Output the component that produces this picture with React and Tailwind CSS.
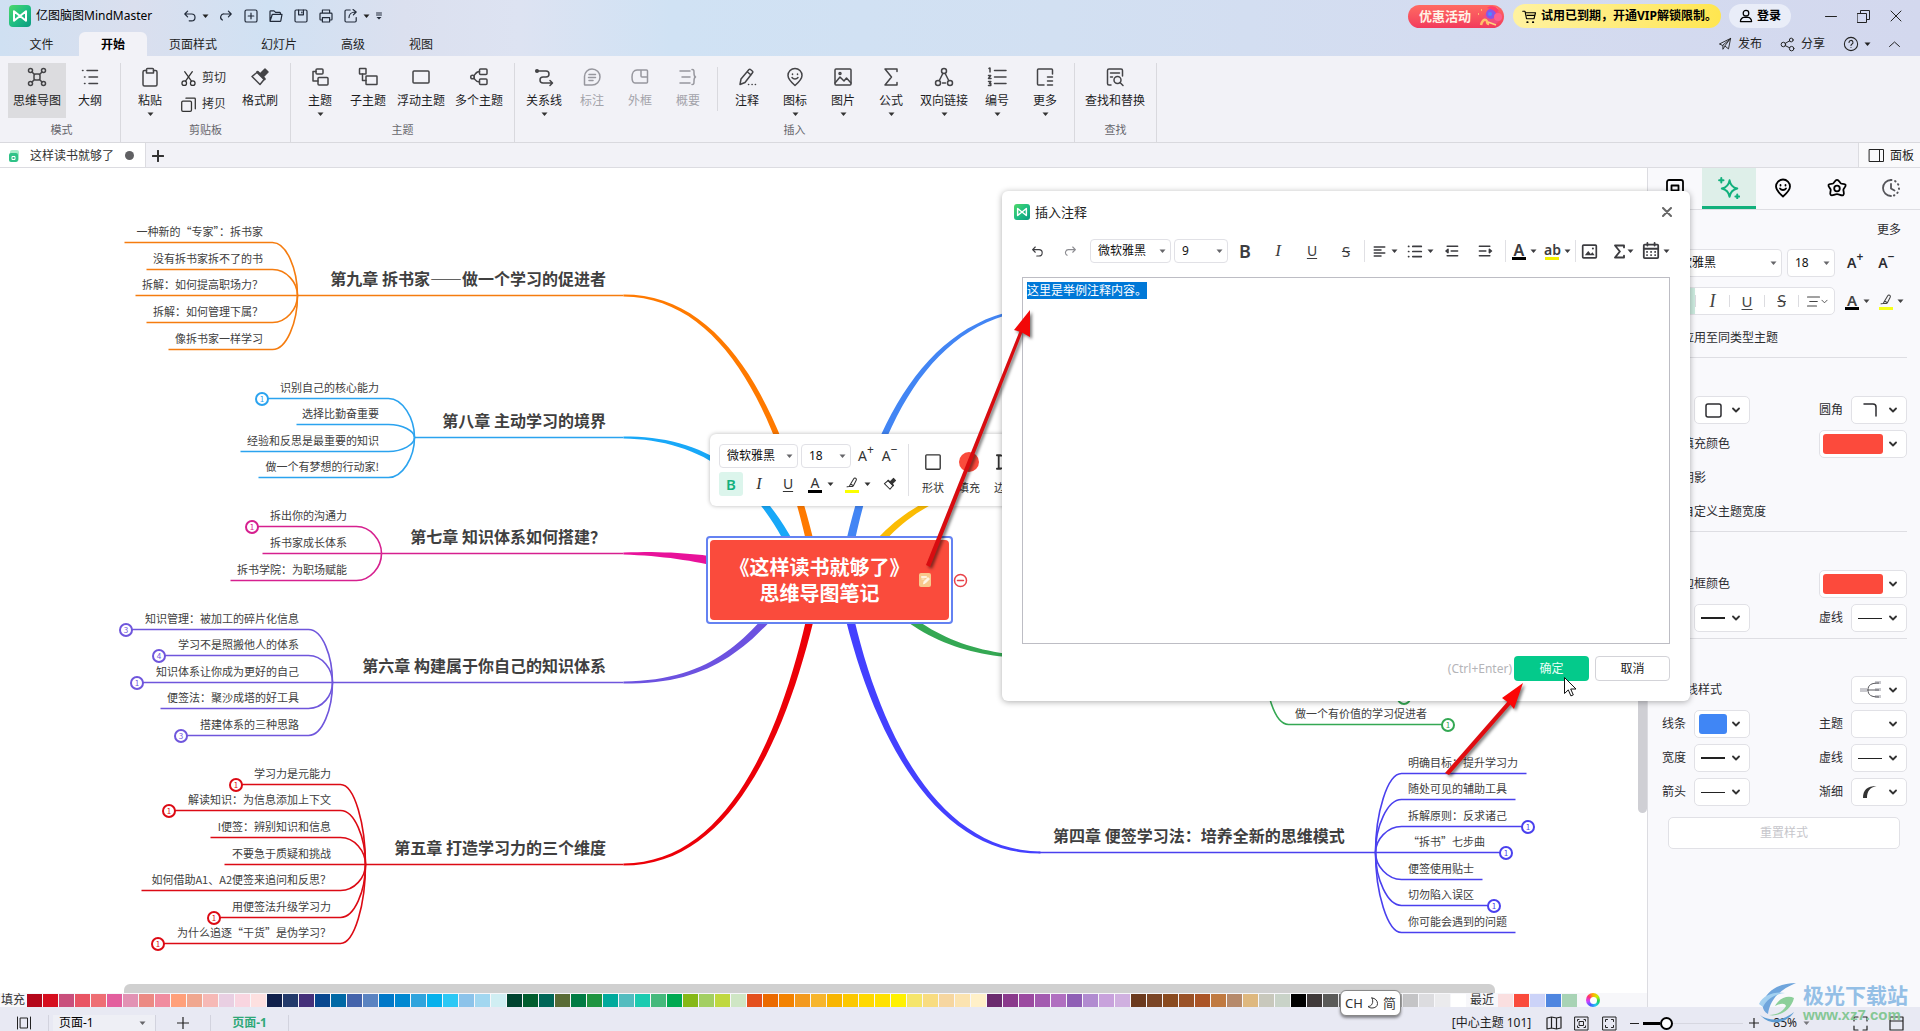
import React, { useEffect, useRef } from "react";

/* ---------- drawing helpers ---------- */

function Svg({ s = 20, w = 1.5, box = 20, className = "", children }) {
  return (
    <svg
      width={s}
      height={s}
      viewBox={`0 0 ${box} ${box}`}
      fill="none"
      stroke="currentColor"
      strokeWidth={w}
      strokeLinecap="round"
      strokeLinejoin="round"
      aria-hidden="true"
      className={`shrink-0 ${className}`}
    >
      {children}
    </svg>
  );
}

function Caret({ className = "" }) {
  return (
    <svg width="7" height="5" viewBox="0 0 7 5" aria-hidden="true" className={`shrink-0 ${className}`}>
      <path d="M0.500 0.5h6L3.5 4z" fill="currentColor" />
    </svg>
  );
}

function Chevron() {
  return (
    <Svg s={8} box={8} w={1.8} className="text-[#333]">
      <path d="M1 2.5l3 3 3-3" />
    </Svg>
  );
}

function Logo({ size = 22 }) {
  return (
    <svg width={size} height={size} viewBox="0 0 22 22" aria-hidden="true" className="shrink-0">
      <defs>
        <linearGradient id={`lg${size}`} x1="0" y1="0" x2="1" y2="1">
          <stop offset="0" stopColor="#4fd768" />
          <stop offset="0.5" stopColor="#1fbf82" />
          <stop offset="1" stopColor="#0a9a80" />
        </linearGradient>
      </defs>
      <rect width="22" height="22" rx="4" fill={`url(#lg${size})`} />
      <path d="M5 6.2v9.6L11 11 5 6.2zM17 6.2v9.6L11 11z" fill="none" stroke="#fff" strokeWidth="2" strokeLinejoin="round" />
    </svg>
  );
}

/* ---------- icons ---------- */

const I = {
  undo: <path d="M7 4L3.500 7.500 7 11M3.500 7.500H12a4 4 0 0 1 0 8.500H9" />,
  redo: <path d="M13 4l3.500 3.500L13 11M16.500 7.500H8a4 4 0 0 0-2.500 7.500" />,
  newDoc: <><rect x="2.500" y="2.500" width="15" height="15" rx="2" /><path d="M10 6.500v7M6.500 10h7" /></>,
  open: <path d="M2.500 16V4.500a1 1 0 0 1 1-1h4l2 2h5a1 1 0 0 1 1 1V8M2.500 16.500L5 9a1 1 0 0 1 1-1h11.500L16 16a1 1 0 0 1-1 .8H3z" />,
  save: <><rect x="2.500" y="2.500" width="15" height="15" rx="1.500" /><path d="M7 2.500v6h6v-6M11 5v1" /></>,
  print: <path d="M5.500 6.500v-4h9v4M5.500 15H3.500a1 1 0 0 1-1-1V7.500a1 1 0 0 1 1-1h13a1 1 0 0 1 1 1V14a1 1 0 0 1-1 1h-2M5.500 12h9v5.500h-9z" />,
  exportDoc: <path d="M9 2.500H4a1.500 1.500 0 0 0-1.500 1.500v12A1.500 1.500 0 0 0 4 17.500h11a1.500 1.500 0 0 0 1.500-1.500v-4M7.500 12c0-4 3-7 8-7M12.500 2l4 3-3.500 3.500" />,
  mind: <><rect x="7" y="7" width="6" height="6" rx="1.500" /><circle cx="3.500" cy="3.500" r="2" /><circle cx="16.500" cy="3.500" r="2" /><circle cx="3.500" cy="16.500" r="2" /><circle cx="16.500" cy="16.500" r="2" /><path d="M5 5l2.500 2.500M15 5l-2.500 2.500M5 15l2.500-2.500M15 15l-2.500-2.500" /></>,
  outline: <path d="M2.500 3.500h.5M7 3.500h10.500M4.500 10h.5M9 10h8.500M4.500 16.500h.5M9 16.500h8.500" />,
  paste: <><path d="M6.500 3.500h-2A1.500 1.500 0 0 0 3 5v12.500A1.500 1.500 0 0 0 4.500 19h11a1.500 1.500 0 0 0 1.500-1.500V5a1.500 1.500 0 0 0-1.500-1.500h-2" /><path d="M6.500 2.500a1 1 0 0 1 1-1h5a1 1 0 0 1 1 1V6h-7z" /></>,
  cut: <><circle cx="5" cy="15.500" r="2.700" /><circle cx="15" cy="15.500" r="2.700" /><path d="M6.500 13L14.500 2M13.500 13L5.500 2" /></>,
  copy: <><rect x="2" y="6" width="11.500" height="12" rx="1.500" /><path d="M7 2.500h10a1 1 0 0 1 1 1V15" /></>,
  brush: <><path d="M7.500 5L14.500 12 10 17.500 2 9.500z" /><path d="M10 7l5-5 3 3-5 5z" fill="currentColor" /><path d="M7.500 5L14.500 12" strokeWidth="2.500" /></>,
  topic: <><rect x="6" y="2" width="7" height="5" rx="1" /><rect x="8" y="10.500" width="10" height="7.500" rx="1" /><path d="M6 4.500H3V14h5" /></>,
  subTopic: <><rect x="1.500" y="1.500" width="6.500" height="5.500" rx="0.500" /><rect x="8" y="9" width="11" height="8.500" rx="0.500" /><path d="M4.500 7v6.500H8" /></>,
  floatTopic: <rect x="2" y="4" width="16" height="12" rx="1" />,
  multi: <><rect x="10.500" y="2" width="7.500" height="5.500" rx="1" /><rect x="10.500" y="12" width="7.500" height="5.500" rx="1" /><circle cx="3.500" cy="10" r="1.800" /><path d="M10.500 4.500C7 4.500 6.500 7 5 8.800M10.500 15C7 15 6.500 13 5 11.200" /></>,
  relation: <><circle cx="3" cy="4" r="1.300" fill="currentColor" /><path d="M3 4h9a3 3 0 0 1 0 6H9a3 3 0 0 0 0 6h9M16 13.500l2.500 2.500-2.500 2.500" /></>,
  callout: <path d="M10 2a8 8 0 0 1 0 16H3a.5.5 0 0 1-.5-.5V9.500A7.500 7.500 0 0 1 10 2zM7 7.500h6.500M6.500 10.500h7M7 13.500h4" />,
  boundary: <path d="M11 3H7C4 3 2 6 2 10c0 3 1 6 3 6h11.500a1 1 0 0 0 1-1V4a1 1 0 0 0-1-1H11v6a1 1 0 0 0 1 1h5.500" />,
  summary: <path d="M2 4h10M4 10h8M2 16h10M14 2.500c2 0 2 1 2 3.500s0 3.500 1.500 4c-1.500.5-1.500 1.500-1.500 4s0 3.500-2 3.500" />,
  note: <path d="M3 17.500L4 12 12 2.500a1 1 0 0 1 1.500 0l2 1.700a1 1 0 0 1 0 1.500L8 15.500 3 17.500zM10.500 5L14 8M11.500 17.500h.2M15 17.500h.2M18.300 17.500h.2" />,
  marker: <><path d="M10 18.500C6 15 3 12 3 8.500a7 7 0 0 1 14 0c0 3.500-3 6.500-7 10z" /><path d="M7.500 7v.5M12.500 7v.5M7 10.500c1.500 2 4.500 2 6 0" /></>,
  picture: <><rect x="2" y="2" width="16" height="16" rx="1" /><path d="M2 16l5-6 4 4 2.500-3 4.500 5" /><circle cx="7" cy="6.500" r="1" /></>,
  sigma: <path d="M16 4.500V2H4l6.500 8L4 18h12v-2.500" />,
  links: <><circle cx="10" cy="4" r="2.500" /><circle cx="4" cy="16" r="2.500" /><circle cx="16" cy="16" r="2.500" /><path d="M8.800 6.500L5.300 13.500M11.200 6.500l3.500 7M8.500 16h3" /></>,
  numbering: <path d="M7.500 3.500H19M7.500 10H19M7.500 16.500H19M2 1.500l1-.5v4M1.500 8.500h2.200L1.500 11.500h2.500M1.500 14.500h2.300L2.500 16.500h1.300v2H1.500" />,
  moreBox: <path d="M9 18H3.500a1 1 0 0 1-1-1V3a1 1 0 0 1 1-1h13a1 1 0 0 1 1 1v4M12.500 10h5M12.500 14h5M12.500 18h5" />,
  find: <><path d="M6 18H4a1.500 1.500 0 0 1-1.500-1.500v-13A1.500 1.500 0 0 1 4 2h12a1.500 1.500 0 0 1 1.500 1.500V9M5.500 6h9M5.500 10h2" /><circle cx="12.500" cy="13" r="3.500" /><path d="M15 15.500l3 3" /></>,
  frame: <><path d="M2 7V4a2 2 0 0 1 2-2h12a2 2 0 0 1 2 2v12a2 2 0 0 1-2 2H4a2 2 0 0 1-2-2z" /><rect x="6.500" y="7.500" width="7" height="5" /></>,
  spark: <path d="M10.500 3c.8 4.500 2.500 6.500 7 7.500-4.500 1-6.200 3-7 7.500-.8-4.500-2.500-6.500-7-7.500 4.500-1 6.200-3 7-7.500zM3 1v4M1 3h4M17.500 16v3.500M15.800 17.700h3.500" />,
  flower: <><path d="M10 1.800c2 0 2.600 3 4 3.700s4-.4 4.600 1.400-1.900 3.200-2.200 4.800 1.500 4-.1 5.300-3.600-.8-6.300-.8-4.600 2-6.200.8.200-3.800-.1-5.300S.800 8.700 1.500 6.900s3.200-.7 4.600-1.400 2-3.700 3.900-3.700z" /><circle cx="10" cy="10.500" r="2.800" /></>,
  history: <><path d="M10 2a8 8 0 1 0 0 16" /><path d="M10 2a8 8 0 0 1 0 16" strokeDasharray="0.500 3.800" strokeWidth="2" /><path d="M10 6v4.500l3.500 2" /></>,
  plane: <path d="M18 2L2 10l4.500 2L16 4M18 2l-3 15-5-4-3 4.500V12M18 2L9.500 13" />,
  share: <><circle cx="4.500" cy="10" r="3" /><circle cx="15" cy="4" r="2.500" /><circle cx="15.500" cy="15.500" r="3" /><path d="M7 8.500l6-3.500M7 11.500l6 3" /></>,
  help: <><circle cx="10" cy="10" r="8.300" /><path d="M7.500 8a2.500 2.500 0 1 1 3.500 2.300c-.7.300-1 .7-1 1.500M10 14.300v.1" /></>,
  alignLeft: <path d="M3 4h14M3 8h9M3 12h14M3 16h9" />,
  alignMid: <path d="M2 4h16M5 10h10M2 16h12" />,
  bullets: <path d="M8 4h10M8 10h10M8 16h10M3 4h.3M3 10h.3M3 16h.3" />,
  outdent: <path d="M4 4h13M9 10h8M4 16h13M5 8l-2.500 2L5 12z" />,
  indent: <path d="M3 4h13M3 10h8M3 16h13M15.500 8l2.500 2-2.500 2z" />,
  image: <><rect x="2" y="2.500" width="16" height="15" rx="1" /><path d="M4.500 14.500l4-5 3 3.500 2-2 2.500 3.500z" fill="currentColor" stroke="none" /><circle cx="14" cy="6.500" r="1.200" fill="currentColor" stroke="none" /></>,
  calendar: <><rect x="2" y="3" width="16" height="15" rx="1" /><path d="M2 7.500h16M6 1v3M14 1v3M5.500 11h.2M10 11h.2M14.500 11h.2M5.500 14.500h.2M10 14.500h.2M14.500 14.500h.2" /></>,
  pen: <path d="M8 11.500L6 15l-3 .5M8 11.500L12.500 4a2 2 0 0 1 3.500 2l-4 8-4-2.500zM12 14l-1.500 1H6" />,
};

/* ---------- title bar ---------- */

const quick = [
  ["撤销", I.undo], ["重做", I.redo], ["新建", I.newDoc], ["打开", I.open],
  ["保存", I.save], ["打印", I.print], ["导出", I.exportDoc],
];

function TitleBar() {
  return (
    <header className="shrink-0 bg-[linear-gradient(90deg,#cfe0f2_0%,#dadfee_7%,#d0e1f3_14%,#dbe0ef_21%,#dde3f2_27%,#d0e2f4_35%,#d2e0f2_55%,#d4dcf0_75%,#d3d8ee_100%)]">
      <div className="flex h-8 items-center pr-[18px] pl-[9px]">
        <Logo size={22} />
        <h1 className="ml-[5px] text-[12px] whitespace-nowrap text-black">亿图脑图MindMaster</h1>
        <div className="ml-[30px] flex items-center gap-[9px] text-[#222b3a]">
          {quick.map(([n, ic]) => (
            <button key={n} aria-label={n} className="flex items-center gap-1">
              <Svg s={16}>{ic}</Svg>
              {(n === "撤销" || n === "导出") && <Caret className="text-[#222]" />}
            </button>
          ))}
          <button aria-label="自定义快速访问工具栏" className="-ml-1">
            <Svg s={8} box={8} w={1}><path d="M1.500 1h5M1.500 3h5" /><path d="M1.500 5h5L4 7.500z" fill="currentColor" stroke="none" /></Svg>
          </button>
        </div>
        <div className="flex-1" />
        <button className="relative flex h-[23px] w-24 items-center rounded-full bg-gradient-to-b from-[#ff6a62] to-[#f23a5c] pl-[11px] text-[13px] font-bold text-[#fff3e6]">
          优惠活动
          <svg width="28" height="22" viewBox="0 0 28 22" className="absolute right-0 top-0" aria-hidden="true">
            <path d="M7 12l6-8 9 2 4 7-6 6-8 0z" fill="#f04e7e" />
            <circle cx="15" cy="9" r="5" fill="#8a55e8" />
            <circle cx="22" cy="12" r="4" fill="#ff5f8e" />
            <path d="M5 20c1-4 3-6 5-5s0 4 3 4" stroke="#ffc06a" strokeWidth="2.500" fill="none" />
            <path d="M2 9h1M5 5h1M20 3l2 2M12 17l8 3" stroke="#ffd27a" strokeWidth="1.500" />
            <path d="M11 3c3-3 9-2 12 2l-3 3c-2-3-5-4-9-5z" fill="#ff3f6d" />
            <circle cx="14" cy="9" r="2" fill="#4d8bff" />
          </svg>
        </button>
        <button className="ml-[9px] flex h-6 w-52 items-center rounded-full bg-gradient-to-r from-[#fff2a0] to-[#ffe64f] pl-[9px] text-[12px] font-bold whitespace-nowrap text-black">
          <Svg s={15} className="mr-1"><path d="M1 3h3l2 10h10l2-8H5" /><path d="M6.500 8.500h10" /><path d="M7 17.500h.5M14.500 17.500h.5" strokeWidth="2.500" /></Svg>
          试用已到期，开通VIP解锁限制。
        </button>
        <button className="ml-2 flex h-6 w-[62px] items-center justify-center gap-1 rounded-full bg-[#e9edf8] text-[12px] font-bold text-black">
          <Svg s={14} w={1.8}><circle cx="10" cy="6" r="4" /><path d="M2 18c0-4 3-6 5-6h6c2 0 5 2 5 6z" /></Svg>
          登录
        </button>
        <div className="ml-[34px] flex items-center gap-5 text-[#222]">
          <button aria-label="最小化"><Svg s={12} box={12} w={1}><path d="M0.500 6.500h11" /></Svg></button>
          <button aria-label="还原"><Svg s={13} box={13} w={1}><path d="M0.500 3.500h9v9h-9zM3.500 3.500v-3h9v9h-3" /></Svg></button>
          <button aria-label="关闭"><Svg s={12} box={12} w={1}><path d="M1 1l10 10M11 1L1 11" /></Svg></button>
        </div>
      </div>
      <div className="flex h-6 items-stretch pr-5 text-[12px] text-[#222]">
        <nav className="flex">
          <button className="w-[79px] pt-0.5 pl-1">文件</button>
          <button className="w-[68px] rounded-t-md bg-[#f2f2f7] pt-0.5 font-bold text-black">开始</button>
          <button className="w-[92px] pt-0.5">页面样式</button>
          <button className="w-20 pt-0.5">幻灯片</button>
          <button className="w-[68px] pt-0.5">高级</button>
          <button className="w-[68px] pt-0.5">视图</button>
        </nav>
        <div className="flex-1" />
        <button className="flex items-center gap-[6px]"><Svg s={14} w={1.3}>{I.plane}</Svg>发布</button>
        <button className="ml-[18px] flex items-center gap-[6px]"><Svg s={15} w={1.3}>{I.share}</Svg>分享</button>
        <button aria-label="帮助" className="ml-[18px] flex items-center gap-[5px]"><Svg s={16} w={1.3}>{I.help}</Svg><Caret /></button>
        <button aria-label="折叠功能区" className="ml-[18px]"><Svg s={11} box={11} w={1}><path d="M0.500 7.500l5-4.500 5 4.500" /></Svg></button>
      </div>
    </header>
  );
}

/* ---------- ribbon ---------- */

function Tool({ icon, label, caret, active, disabled }) {
  return (
    <button
      disabled={disabled}
      className={`flex h-[55px] min-w-12 flex-col items-center px-[5px] pt-1 text-[12px] whitespace-nowrap ${active ? "bg-[#dcdcdf] text-[#222]" : disabled ? "text-[#a3a3aa]" : "text-[#1d1d1f]"}`}
    >
      <span className={disabled ? "text-[#97979e]" : "text-[#444447]"}><Svg s={20}>{icon}</Svg></span>
      <span className="mt-[5px] leading-[18px]">{label}</span>
      {caret && <Caret className="mt-0.5 text-[#333]" />}
    </button>
  );
}

function Group({ label, children, className = "" }) {
  return (
    <section className={`flex shrink-0 flex-col border-r border-[#d9d9de] ${className}`}>
      <div className="flex">{children}</div>
      <div className="mt-1 pr-[5px] text-center text-[11px] leading-4 text-[#66666c]">{label}</div>
    </section>
  );
}

function Ribbon() {
  return (
    <div className="flex h-[87px] shrink-0 border-b border-[#d9d9de] bg-[#f2f2f7] pt-[7px]">
      <Group label="模式" className="w-[121px] pl-2">
        <Tool icon={I.mind} label="思维导图" active />
        <Tool icon={I.outline} label="大纲" />
      </Group>
      <Group label="剪贴板" className="w-[170px] pl-[5px]">
        <Tool icon={I.paste} label="粘贴" caret />
        <div className="ml-[6px] flex flex-col gap-2 pt-[6px] text-[12px] text-[#333]">
          <button className="flex items-center gap-[5px] leading-[18px]"><Svg s={17}>{I.cut}</Svg>剪切</button>
          <button className="flex items-center gap-[5px] leading-[18px]"><Svg s={17}>{I.copy}</Svg>拷贝</button>
        </div>
        <div className="ml-[10px]"><Tool icon={I.brush} label="格式刷" /></div>
      </Group>
      <Group label="主题" className="w-[224px] pl-[5px]">
        <Tool icon={I.topic} label="主题" caret />
        <Tool icon={I.subTopic} label="子主题" />
        <Tool icon={I.floatTopic} label="浮动主题" />
        <Tool icon={I.multi} label="多个主题" />
      </Group>
      <Group label="插入" className="w-[560px] pl-[5px]">
        <Tool icon={I.relation} label="关系线" caret />
        <Tool icon={I.callout} label="标注" disabled />
        <Tool icon={I.boundary} label="外框" disabled />
        <Tool icon={I.summary} label="概要" disabled />
        <span className="mx-[5px] mt-1 h-11 w-px bg-[#d9d9de]" />
        <Tool icon={I.note} label="注释" />
        <Tool icon={I.marker} label="图标" caret />
        <Tool icon={I.picture} label="图片" caret />
        <Tool icon={I.sigma} label="公式" caret />
        <Tool icon={I.links} label="双向链接" caret />
        <Tool icon={I.numbering} label="编号" caret />
        <Tool icon={I.moreBox} label="更多" caret />
      </Group>
      <Group label="查找" className="w-[82px] pl-[5px]">
        <Tool icon={I.find} label="查找和替换" />
      </Group>
    </div>
  );
}

function FileTabs() {
  return (
    <div className="flex h-[25px] shrink-0 items-stretch border-b border-[#dcdce1] bg-[#f2f2f7] text-[12px]">
      <div className="flex w-[146px] items-center border-r border-[#dcdce1] bg-white pt-px pl-[9px]">
        <svg width="11" height="12" viewBox="0 0 11 12" aria-hidden="true">
          <rect x="1" width="9" height="11" rx="2" fill="#a6ecc9" />
          <rect y="3" width="9" height="9" rx="2" fill="#2fc287" />
          <path d="M3 6.500h3v3H3z" fill="none" stroke="#fff" />
        </svg>
        <span className="ml-[10px] text-[#333]">这样读书就够了</span>
        <span className="ml-[11px] size-[9px] rounded-full bg-[#606063]" />
      </div>
      <button aria-label="新建标签" className="ml-[6px] pt-px text-[#333]"><Svg s={12} box={12} w={2}><path d="M6 .8v10.400M.8 6h10.400" /></Svg></button>
      <div className="flex-1" />
      <button className="flex w-[62px] items-center gap-[5px] border-l border-[#dcdce1] bg-[#f9f9fb] pt-px pl-[9px] whitespace-nowrap text-[#222]">
        <Svg s={17} box={17} w={1}><path d="M1.500 2.500h14v12h-14zM11.500 2.500v12" /></Svg>
        面板
      </button>
    </div>
  );
}

/* ---------- mind map ---------- */

const branches = [
  {
    color: "#f57c0f", hub: [297, 127], end: 272, side: -1, title: "第九章 拆书家——做一个学习的促进者", edge: 606,
    leaves: [
      ["一种新的“专家”：拆书家", 74, 124], ["没有拆书家拆不了的书", 101, 146], ["拆解：如何提高职场力？", 127, 135],
      ["拆解：如何管理下属？", 154, 146], ["像拆书家一样学习", 181, 168],
    ],
  },
  {
    color: "#2ba3ef", hub: [414, 269], end: 388, side: -1, title: "第八章 主动学习的境界", edge: 606,
    leaves: [
      ["识别自己的核心能力", 230, 261, 1], ["选择比勤奋重要", 256, 296], ["经验和反思是最重要的知识", 283, 240], ["做一个有梦想的行动家!", 309, 258],
    ],
  },
  {
    color: "#d6208f", hub: [381, 385], end: 356, side: -1, title: "第七章 知识体系如何搭建？", edge: 606,
    leaves: [["拆出你的沟通力", 358, 251, 1], ["拆书家成长体系", 385, 262], ["拆书学院：为职场赋能", 412, 230]],
  },
  {
    color: "#6f56dc", hub: [332, 514], end: 308, side: -1, title: "第六章 构建属于你自己的知识体系", edge: 606,
    leaves: [
      ["知识管理：被加工的碎片化信息", 461, 125, 3], ["学习不是照搬他人的体系", 487, 158, 4], ["知识体系让你成为更好的自己", 514, 136, 1],
      ["便签法：聚沙成塔的好工具", 540, 160], ["搭建体系的三种思路", 567, 180, 3],
    ],
  },
  {
    color: "#dc0a14", hub: [365, 696], end: 340, side: -1, title: "第五章 打造学习力的三个维度", edge: 606,
    leaves: [
      ["学习力是元能力", 616, 235, 1], ["解读知识：为信息添加上下文", 642, 168, 1], ["I便签：辨别知识和信息", 669, 210], ["不要急于质疑和挑战", 696, 224],
      ["如何借助A1、A2便签来追问和反思？", 722, 141], ["用便签法升级学习力", 749, 213, 1], ["为什么追逐“干货”是伪学习？", 775, 157, 1],
    ],
  },
  {
    color: "#4a40ee", hub: [1375, 684], end: 1401, side: 1, title: "第四章 便签学习法：培养全新的思维模式", edge: 1053,
    leaves: [
      ["明确目标：提升学习力", 605, 1526], ["随处可见的辅助工具", 631, 1515], ["拆解原则：反求诸己", 658, 1527, 1], ["“拆书”七步曲", 684, 1505, 1],
      ["便签使用贴士", 711, 1482], ["切勿陷入误区", 737, 1493, 1], ["你可能会遇到的问题", 764, 1515],
    ],
  },
  {
    color: "#34a853", hub: [1264, 489], end: 1288, side: 1, title: "", edge: 1060,
    leaves: [["", 529, 1403, 1], ["做一个有价值的学习促进者", 556, 1447, 1]],
  },
];

/* root, control, control, end, colour, widths at root and end */
const trunks = [
  [[818, 412], [790, 272], [735, 127], [623, 127], "#ff7a00", 8, 2],
  [[806, 412], [765, 307], [700, 269], [623, 269], "#18a8f8", 9, 2],
  [[830, 426], [750, 398], [700, 385], [623, 385], "#e8129a", 18, 2],
  [[795, 417], [750, 472], [715, 514], [623, 514], "#6c52e0", 9, 2],
  [[818, 412], [790, 552], [735, 696], [623, 696], "#ec0008", 8, 2],
  [[841, 412], [868, 552], [930, 684], [1040, 684], "#4440ff", 9, 2],
  [[874, 417], [920, 472], [975, 488], [1040, 489], "#34a853", 9, 2],
  [[845, 422], [878, 362], [920, 325], [1000, 312], "#fbbc04", 9, 3],
  [[842, 412], [867, 272], [920, 150], [1035, 140], "#4285f4", 9, 2],
];

function taper([p0, p1, p2, p3, , w0, w1]) {
  const a = [];
  const b = [];
  for (let i = 0; i <= 32; i++) {
    const t = i / 32;
    const u = 1 - t;
    const at = (k) => u * u * u * p0[k] + 3 * u * u * t * p1[k] + 3 * u * t * t * p2[k] + t * t * t * p3[k];
    const dt = (k) => u * u * (p1[k] - p0[k]) + 2 * u * t * (p2[k] - p1[k]) + t * t * (p3[k] - p2[k]);
    const dx = dt(0);
    const dy = dt(1);
    const n = Math.hypot(dx, dy) || 1;
    const h = (w0 + (w1 - w0) * t) / 2;
    a.push(`${(at(0) - (dy / n) * h).toFixed(1)} ${(at(1) + (dx / n) * h).toFixed(1)}`);
    b.unshift(`${(at(0) + (dy / n) * h).toFixed(1)} ${(at(1) - (dx / n) * h).toFixed(1)}`);
  }
  return `M${a.concat(b).join("L")}Z`;
}

function leafPath(b, [, y, x]) {
  const [hx, hy] = b.hub;
  return `M${x} ${y}H${b.end}C${b.end - b.side * 14} ${y} ${hx} ${hy + (y - hy) * 0.5} ${hx} ${hy}`;
}

function sidePos(side, x) {
  return side < 0 ? { right: `calc(100% - ${x}px)` } : { left: x };
}

function MindMap() {
  return (
    <div className="relative flex-1 overflow-hidden bg-white font-['Noto_Sans_CJK_SC',sans-serif] text-[#404040]">
      <svg className="absolute inset-0 h-full w-full" aria-hidden="true">
        <g transform="translate(0.5 0.5)">
          {trunks.map((t, i) => <path key={i} d={taper(t)} fill={t[4]} />)}
          {branches.map((b) => (
            <g key={b.title} stroke={b.color} strokeWidth="1.600" fill="none">
              <path d={`M${b.hub[0]} ${b.hub[1]}H${b.side < 0 ? 623 : 1038}`} />
              {b.leaves.map((l) => <path key={l[1]} d={leafPath(b, l)} />)}
            </g>
          ))}
        </g>
      </svg>
      {branches.map((b) => (
        <React.Fragment key={b.title}>
          {b.title && (
            <div className="absolute text-[16px] leading-6 font-bold whitespace-nowrap" style={{ ...sidePos(b.side, b.edge), top: b.hub[1] - 29 }}>{b.title}</div>
          )}
          {b.leaves.map(([text, y, x, badge]) => (
            <React.Fragment key={y}>
              <div className="absolute text-[11px] leading-4 whitespace-nowrap" style={{ ...sidePos(b.side, b.end + b.side * (b.side < 0 ? 9 : 7)), top: y - 19 }}>{text}</div>
              {badge && (
                <button
                  className="absolute flex size-[14px] items-center justify-center rounded-full border-2 bg-white text-[8px] leading-none"
                  style={{ left: x - 6, top: y - 6, color: b.color, borderColor: b.color }}
                >
                  {badge}
                </button>
              )}
            </React.Fragment>
          ))}
        </React.Fragment>
      ))}
      <div className="absolute top-[368px] left-[706px] rounded-sm border-2 border-[#6482f2] bg-white p-[2px]">
        <div className="relative h-20 w-[239px] rounded-[4px] bg-[#fa4b3c] pt-[14px] pr-5 text-center text-[20px] leading-[26px] font-bold text-white">
          《这样读书就够了》<br />思维导图笔记
          <svg width="12" height="14" viewBox="0 0 12 14" className="absolute top-[33px] left-[209px]" aria-hidden="true">
            <rect width="12" height="14" rx="2" fill="#f8c98c" />
            <path d="M2.500 3.500h5v1h-5zM2.500 6h3M4.500 11l.5-2.500 4-4 1.500 1.500-4 4z" stroke="#fff6e6" strokeWidth="0.800" fill="#fff6e6" />
          </svg>
        </div>
      </div>
      <button aria-label="折叠" className="absolute top-[405px] left-[953px] text-[#e8434a]">
        <Svg s={15} box={15} w={1.5}><circle cx="7.500" cy="7.500" r="6" fill="#fff" /><path d="M4.500 7.500h6" /></Svg>
      </button>
      <FloatBar />
    </div>
  );
}

function Select({ label, value, className = "" }) {
  return (
    <span className={`relative inline-flex shrink-0 items-center ${className}`}>
      <select aria-label={label} defaultValue={value} className="h-full w-full appearance-none rounded-[4px] border border-[#e1e1e6] bg-white pl-[7px] text-[12px] text-[#111]">
        <option>{value}</option>
      </select>
      <Caret className="pointer-events-none absolute right-[5px] text-[#66666a]" />
    </span>
  );
}

function ColorLetter({ children, bar, className = "" }) {
  return (
    <span className="flex flex-col items-center">
      <span className={`leading-[14px] ${className}`}>{children}</span>
      <span className={`h-[3px] w-[14px] ${bar}`} />
    </span>
  );
}

function Resize({ sign }) {
  return <span className="flex text-[14px] leading-4">A<sup className="top-[-4px] text-[12px] leading-none">{sign}</sup></span>;
}

function FloatBar() {
  return (
    <div className="absolute top-[266px] left-[710px] flex h-[72px] w-[380px] rounded-md bg-white px-[9px] pt-[10px] font-['Noto_Sans','Noto_Sans_CJK_SC',sans-serif] text-[#333] shadow-[0_0_4px_rgba(0,0,0,0.28)]">
      <div className="mb-[10px] flex w-[190px] flex-col gap-1 border-r border-[#e0e0e4]">
        <div className="flex items-center">
          <Select label="字体" value="微软雅黑" className="h-6 w-[79px]" />
          <Select label="字号" value="18" className="ml-[3px] h-6 w-[50px]" />
          <button aria-label="增大字号" className="ml-[7px]"><Resize sign="+" /></button>
          <button aria-label="减小字号" className="ml-2"><Resize sign="−" /></button>
        </div>
        <div className="flex items-center">
          <button className="size-6 rounded-[3px] bg-[#dcf5ec] text-[15px] leading-6 font-semibold text-[#15b07c]">B</button>
          <button className="ml-[10px] w-3 font-['Liberation_Serif'] text-[16px] leading-6 italic">I</button>
          <button className="ml-[17px] w-3 text-[14px] leading-6 underline underline-offset-2">U</button>
          <button aria-label="文字颜色" className="ml-[14px] flex items-center gap-[5px]"><ColorLetter bar="bg-black" className="text-[14px]">A</ColorLetter><Caret /></button>
          <button aria-label="突出显示" className="ml-[11px] flex items-center gap-[5px]"><ColorLetter bar="bg-[#fbff00]"><Svg s={14}>{I.pen}</Svg></ColorLetter><Caret /></button>
          <button aria-label="格式刷" className="ml-3"><Svg s={14}>{I.brush}</Svg></button>
        </div>
      </div>
      <div className="ml-[6px] flex text-[11px] leading-4">
        <button className="flex w-9 flex-col items-center pt-[9px]"><Svg s={18} w={1.5}><rect x="2" y="2" width="16" height="16" rx="1" /></Svg><span className="mt-[9px]">形状</span></button>
        <button className="flex w-9 flex-col items-center pt-2"><span className="size-5 rounded-full bg-[#fa4b3c]" /><span className="mt-2">填充</span></button>
        <button className="flex w-9 flex-col items-center pt-[9px]"><Svg s={18} w={2}><path d="M3 3v14h14V3zM1 2.500h4M1 17.500h4" /></Svg><span className="mt-[9px]">边框</span></button>
      </div>
    </div>
  );
}

/* ---------- note dialog ---------- */

function NoteDialog() {
  const box = useRef(null);
  useEffect(() => {
    box.current.focus();
    box.current.select();
  }, []);
  const sep = <span className="h-[22px] w-px shrink-0 bg-[#e0e0e4]" />;
  return (
    <div role="dialog" aria-label="插入注释" className="absolute top-[23px] left-[1002px] flex h-[510px] w-[688px] flex-col rounded-md bg-white pr-5 pl-[20px] shadow-[0_1px_6px_rgba(0,0,0,0.32)]">
      <div className="-ml-2 flex h-[42px] items-center">
        <Logo size={16} />
        <h2 className="ml-[5px] text-[13px] text-[#222]">插入注释</h2>
        <div className="flex-1" />
        <button aria-label="关闭" className="-mr-[10px] p-2 text-[#666]"><Svg s={10} box={10} w={2}><path d="M1 1l8 8M9 1L1 9" /></Svg></button>
      </div>
      <div className="mt-[6px] flex h-6 items-center text-[#3c3c40]">
        <button aria-label="撤销" className="ml-2 w-4"><Svg s={15}>{I.undo}</Svg></button>
        <button aria-label="重做" className="ml-[17px] w-4 text-[#8b8b90]"><Svg s={15}>{I.redo}</Svg></button>
        <Select label="字体" value="微软雅黑" className="ml-[11px] h-6 w-[81px]" />
        <Select label="字号" value="9" className="ml-[3px] h-6 w-[54px]" />
        <button className="ml-[9px] w-4 text-[18px] leading-6 font-semibold">B</button>
        <button className="ml-[17px] w-4 font-['Liberation_Serif'] text-[17px] leading-6 italic">I</button>
        <button className="ml-[18px] w-4 text-[14px] leading-6 underline underline-offset-2">U</button>
        <button className="ml-[18px] w-4 text-[15px] leading-6 line-through">S</button>
        <span className="w-[10px]" />
        {sep}
        <button aria-label="对齐" className="ml-[7px] flex items-center gap-1"><Svg s={15} w={2}>{I.alignLeft}</Svg><Caret /></button>
        <button aria-label="项目符号" className="ml-2 flex items-center gap-1"><Svg s={17} w={2}>{I.bullets}</Svg><Caret /></button>
        <button aria-label="减少缩进" className="ml-[10px]"><Svg s={16} w={2}>{I.outdent}</Svg></button>
        <button aria-label="增加缩进" className="ml-[17px]"><Svg s={16} w={2}>{I.indent}</Svg></button>
        <span className="w-3" />
        {sep}
        <button aria-label="文字颜色" className="ml-[6px] flex items-center gap-1"><ColorLetter bar="bg-black" className="text-[16px] font-semibold">A</ColorLetter><Caret /></button>
        <button aria-label="背景颜色" className="ml-[7px] flex items-center gap-[3px]"><ColorLetter bar="bg-[#f4f000]" className="text-[14px] font-semibold">ab</ColorLetter><Caret /></button>
        <span className="w-1" />
        {sep}
        <button aria-label="图片" className="ml-[5px]"><Svg s={17} w={2}>{I.image}</Svg></button>
        <button aria-label="公式" className="ml-[14px] flex items-center"><Svg s={15} w={2.5}>{I.sigma}</Svg><Caret /></button>
        <button aria-label="日期" className="ml-2 flex items-center gap-[3px]"><Svg s={18} w={2}>{I.calendar}</Svg><Caret /></button>
      </div>
      <textarea
        ref={box}
        aria-label="注释内容"
        spellCheck={false}
        defaultValue="这里是举例注释内容。"
        className="mt-[14px] h-[367px] w-full resize-none border border-[#bdbdc4] bg-white px-1 pt-1 text-[12px] leading-[17px] text-[#222] outline-none selection:bg-[#0078d7] selection:text-white"
      />
      <div className="mt-3 flex h-[25px] items-center justify-end text-[12px]">
        <span className="text-[#b4b4b8]">(Ctrl+Enter)</span>
        <button className="ml-[2px] h-full w-[75px] rounded-[4px] bg-[#04ca8b] text-[#eafff7]">确定</button>
        <button className="ml-[6px] h-full w-[75px] rounded-[4px] border border-[#d3d3d8] bg-white text-[#222]">取消</button>
      </div>
    </div>
  );
}

function Arrows() {
  return (
    <svg className="pointer-events-none absolute inset-0 h-full w-full" aria-hidden="true">
      <g style={{ filter: "drop-shadow(2px 2px 1.500px rgba(0,0,0,.5))" }}>
        <path d="M926 397L1020 162L1023 163L930 399Z" fill="#d80c10" />
        <path d="M1030 142L1030 169L1021 164L1014 162Z" fill="#f20808" />
        <path d="M1445 605L1508 533L1511 536L1449 607Z" fill="#e00c10" />
        <path d="M1523 515L1514 541L1509 535L1502 530Z" fill="#fb0606" />
      </g>
      <path d="M1564.500 509.500v16l3.800-3.600 2.600 6 2.400-1-2.600-5.900h5.300z" fill="#fff" stroke="#111" />
    </svg>
  );
}

/* ---------- format panel ---------- */

function Drop({ label, children, className = "w-14" }) {
  return (
    <button aria-label={label} aria-haspopup="listbox" className={`flex h-7 items-center justify-between rounded-[5px] border border-[#e1e1e6] bg-white pr-[9px] pl-[3px] ${className}`}>
      <span className="flex min-w-[30px] items-center justify-center">{children}</span>
      <Chevron />
    </button>
  );
}

function Line({ h = "h-px" }) {
  return <span className={`w-6 bg-[#222] ${h}`} />;
}

function Check({ children, extra }) {
  return (
    <div className="flex h-7 items-center pl-[14px]">
      <label className="flex flex-1 items-center gap-[7px]"><input type="checkbox" className="size-[13px]" />{children}</label>
      {extra}
    </div>
  );
}

function PairRow({ left, leftCtl, right, rightCtl }) {
  return (
    <div className="flex h-7 items-center pl-[14px]">
      <span className="w-8">{left}</span>
      {leftCtl}
      <div className="flex-1" />
      <span className="mr-2">{right}</span>
      {rightCtl}
    </div>
  );
}

function Panel() {
  const tabs = [["主题", I.frame], ["样式", I.spark], ["图标", I.marker], ["剪贴画", I.flower], ["历史", I.history]];
  return (
    <aside className="flex w-[273px] shrink-0 flex-col border-l border-[#dcdce1] bg-[#f9f9fc] text-[12px] text-[#2c2c30]">
      <div role="tablist" className="flex h-[42px] border-b border-[#dedee3] pr-0.5">
        {tabs.map(([n, ic], i) => (
          <button key={n} role="tab" aria-label={n} aria-selected={i === 1} className={`flex flex-1 items-center justify-center border-b-[3px] pt-0.5 ${i === 1 ? "border-[#12b07c] bg-[#deefe9] text-[#12b07c]" : i === 4 ? "border-transparent text-[#55555a]" : "border-transparent text-black"}`}>
            <Svg s={i === 1 ? 22 : 20} w={1.8}>{ic}</Svg>
          </button>
        ))}
      </div>
      <div className="pr-[13px]">
        <div className="flex h-[39px] items-center justify-end pr-[6px]"><button>更多</button></div>
        <div className="flex h-7 items-center pl-3">
          <Select label="主题字体" value="微软雅黑" className="h-7 w-[122px]" />
          <Select label="主题字号" value="18" className="ml-[5px] h-7 w-12" />
          <button aria-label="增大字号" className="ml-3 font-semibold"><Resize sign="+" /></button>
          <button aria-label="减小字号" className="ml-[15px] font-semibold"><Resize sign="−" /></button>
        </div>
        <div className="mt-[10px] flex h-7 items-center pl-3 text-[#444]">
          <div className="flex h-7 w-[175px] items-center overflow-hidden rounded-[5px] border border-[#e1e1e6] bg-white">
            <button className="h-full w-[34px] bg-[#cdece0] text-[15px] font-bold text-[#12b07c]">B</button>
            <button className="h-3 w-[35px] border-l border-[#dcdce0] font-['Liberation_Serif'] text-[18px] leading-3 italic">I</button>
            <button className="h-3 w-[35px] border-l border-[#dcdce0] text-[15px] leading-3 underline underline-offset-2">U</button>
            <button className="h-3 w-[35px] border-l border-[#dcdce0] text-[16px] leading-3 line-through">S</button>
            <button aria-label="对齐" className="flex h-3 w-[36px] items-center justify-center border-l border-[#dcdce0]"><Svg s={15}>{I.alignMid}</Svg><Svg s={7} box={8} w={1}><path d="M1 2.500l3 3 3-3" /></Svg></button>
          </div>
          <button aria-label="文字颜色" className="ml-[10px] flex items-center gap-1"><ColorLetter bar="bg-black" className="text-[15px] font-semibold">A</ColorLetter><Caret /></button>
          <button aria-label="突出显示" className="ml-[9px] flex items-center gap-1"><ColorLetter bar="bg-[#f6ff1a]"><Svg s={14}>{I.pen}</Svg></ColorLetter><Caret /></button>
        </div>
        <div className="mt-[9px]"><Check>应用至同类型主题</Check></div>
        <hr className="mt-[5px] ml-[14px] border-[#dedee3]" />
        <div className="mt-[38px] flex flex-col gap-[6px]">
          <PairRow
            left=""
            leftCtl={<Drop label="形状"><Svg s={17} box={17}><rect x="1" y="2" width="15" height="13" rx="2" /></Svg></Drop>}
            right="圆角"
            rightCtl={<Drop label="圆角"><Svg s={14} box={14}><path d="M1 1h9a3 3 0 0 1 3 3v9" /></Svg></Drop>}
          />
          <Check extra={<Drop label="填充颜色" className="w-[88px]"><span className="h-5 w-[60px] rounded-[3px] bg-[#fc4a3c]" /></Drop>}>填充颜色</Check>
          <Check>阴影</Check>
          <Check>自定义主题宽度</Check>
        </div>
        <hr className="mt-[5px] ml-[14px] border-[#dedee3]" />
        <div className="mt-[38px] flex flex-col gap-[6px]">
          <Check extra={<Drop label="边框颜色" className="w-[88px]"><span className="h-5 w-[60px] rounded-[3px] bg-[#fc4a3c]" /></Drop>}>边框颜色</Check>
          <PairRow left="" leftCtl={<Drop label="宽度"><Line h="h-0.5" /></Drop>} right="虚线" rightCtl={<Drop label="虚线"><Line /></Drop>} />
        </div>
        <hr className="mt-[6px] ml-[14px] border-[#dedee3]" />
        <div className="mt-[37px] flex flex-col gap-[6px]">
          <div className="flex h-7 items-center justify-between pl-[14px]">
            <span>连接线样式</span>
            <Drop label="连接线样式">
              <svg width="21" height="18" viewBox="0 0 21 18" aria-hidden="true">
                <rect x="0" y="7" width="7" height="4" fill="#c9c9ce" /><rect x="15" y="0" width="6" height="3" fill="#c9c9ce" /><rect x="15" y="7" width="6" height="3" fill="#c9c9ce" /><rect x="15" y="14" width="6" height="3" fill="#c9c9ce" />
                <path d="M19 2c-8 0-11 2-11 7s3 7 11 7M7 9h12" fill="none" stroke="#55555a" />
              </svg>
            </Drop>
          </div>
          <PairRow left="线条" leftCtl={<Drop label="线条"><span className="h-5 w-7 rounded-[3px] bg-[#4086f5]" /></Drop>} right="主题" rightCtl={<Drop label="主题" />} />
          <PairRow left="宽度" leftCtl={<Drop label="宽度"><Line h="h-0.5" /></Drop>} right="虚线" rightCtl={<Drop label="虚线"><Line /></Drop>} />
          <PairRow
            left="箭头"
            leftCtl={<Drop label="箭头"><Line /></Drop>}
            right="渐细"
            rightCtl={<Drop label="渐细"><svg width="14" height="14" viewBox="0 0 14 14" aria-hidden="true"><path d="M0 13C0 5 4 1 13.500 1 7 2.500 4 6 4 13z" fill="#333" /></svg></Drop>}
          />
        </div>
        <button disabled className="mt-[11px] ml-5 h-8 w-[232px] rounded-[5px] border border-[#e1e1e6] bg-white text-[#c6c6cb]">重置样式</button>
      </div>
    </aside>
  );
}

/* ---------- bottom bars ---------- */

const palette = [
  "#b4071a", "#d60e1f", "#c94f7c", "#e95464", "#ee6e74", "#e35f9e", "#e292b4", "#ec8a84", "#f18c9f", "#ffa07a", "#f0a78f", "#f6b9b6", "#e9cfe2", "#f9d5e0", "#fde0e0",
  "#10204b", "#233a6b", "#45307a", "#08478f", "#0068a5", "#4463ab", "#5a83c1", "#0078c8", "#0088d1", "#2fa4dd", "#06b1ec", "#2cc8f5", "#8cc3ea", "#a2d7f0", "#d0eef3",
  "#00432f", "#005d2e", "#006657", "#596b35", "#007b43", "#1f9440", "#00aa9c", "#53bcbf", "#1bcbb0", "#45b97c", "#00a951", "#86b817", "#a3cf62", "#c0d83f", "#cfe6c4",
  "#e4501e", "#eb6a00", "#f38200", "#f39a1e", "#f7b52c", "#f8b500", "#fcc800", "#ffd900", "#ffe100", "#fff100", "#f5e56b", "#f8dc80", "#f6d6a0", "#fbe3b0", "#fff0c8",
  "#6b2b6e", "#8a3a8c", "#9b4aa0", "#a35bb0", "#b06fc0", "#8f5fb5", "#b18bd0", "#c8a2dc", "#d0b0e0", "#6b3a1e", "#7a4526", "#8a4b20", "#9a5228", "#ab5527", "#c07a41",
  "#b68a6b", "#deb87f", "#c8c8bc", "#c9d3c8", "#000000", "#403a3a", "#5a5a58", "#727272", "#8a8a8a", "#9f9f9f", "#b4b4b4", "#c4c4c6", "#dcdcdf", "#ebebed", "#ffffff",
];
const recent = ["#fadfe0", "#fa4b3c", "#ccd3f8", "#4f86e0", "#a8d3b5"];

function Swatch({ color }) {
  return <button aria-label={color} className="h-[13px] w-[15px] shrink-0" style={{ backgroundColor: color }} />;
}

function PaletteBar() {
  return (
    <div className="flex h-[14px] shrink-0 items-center gap-px bg-[#f7f7fa] pl-px text-[12px] leading-[14px] whitespace-nowrap text-[#333]">
      <span className="w-[25px]">填充</span>
      {palette.map((c, i) => <Swatch key={i} color={c} />)}
      <span className="w-[30px] pl-[3px]">最近</span>
      {recent.map((c) => <Swatch key={c} color={c} />)}
      <button aria-label="更多颜色" className="ml-2 flex size-[14px] items-center justify-center rounded-full bg-[conic-gradient(#ffb000,#c8f000,#20d060,#20c8f0,#4060ff,#d040ff,#ff3070,#ffb000)]">
        <span className="size-[7px] rounded-full bg-white" />
      </button>
    </div>
  );
}

function StatusBar() {
  const bar = "w-px self-stretch bg-[#d2d3de]";
  return (
    <footer className="relative flex h-6 shrink-0 items-center bg-[#e8e9f3] pt-2 text-[12px] text-[#222]">
      <button aria-label="页面列表" className="ml-4"><Svg s={16} box={16} w={1}><path d="M1.500 2v12M14.500 2v12M4.500 3h7v10h-7z" /></Svg></button>
      <span className={`ml-4 ${bar}`} />
      <span className="relative ml-1 flex h-full w-[102px] items-center">
        <select aria-label="页面" className="w-full appearance-none bg-[#eeeff5] pl-[6px] leading-4 text-black"><option>页面-1</option></select>
        <Caret className="pointer-events-none absolute right-[9px] text-[#66666a]" />
      </span>
      <span className={bar} />
      <button aria-label="添加页面" className="mx-[21px]"><Svg s={12} box={12} w={1.2}><path d="M6 0v12M0 6h12" /></Svg></button>
      <span className={bar} />
      <button className="w-[77px] font-bold text-[#2fa878]">页面-1</button>
      <span className={bar} />
      <div className="flex-1" />
      <span className="mr-[15px]">[中心主题 101]</span>
      <button aria-label="阅读视图" className="mr-3"><Svg s={16} box={16} w={1.2}><path d="M1 3l4.500-1 5 1 4.500-1v11l-4.500 1-5-1L1 14zM5.500 2v11M10.500 3v11" /></Svg></button>
      <button aria-label="适合页面" className="mr-[13px]"><Svg s={15} box={15} w={1}><path d="M1 1h13v13H1zM3.500 5V3.500H5M10 3.500h1.500V5M11.500 10v1.500H10M5 11.500H3.500V10M5.500 5.500h4v4h-4z" /></Svg></button>
      <button aria-label="全屏视图" className="mr-[13px]"><Svg s={15} box={15} w={1}><path d="M1 1h13v13H1zM3.500 5.500v-2h2M9.500 3.500h2v2M11.500 9.500v2h-2M5.500 11.500h-2v-2" /></Svg></button>
      <button aria-label="缩小"><Svg s={9} box={9} w={1.2}><path d="M0 4.500h9" /></Svg></button>
      <label className="relative ml-1 flex h-4 w-[100px] items-center">
        <input type="range" aria-label="缩放" defaultValue="18" className="absolute inset-0 w-full opacity-0" />
        <span className="h-[3px] w-[17px] bg-black" />
        <span className="size-[13px] rounded-full border-2 border-black bg-white" />
        <span className="h-px flex-1 bg-[#d6d7e0]" />
      </label>
      <button aria-label="放大" className="ml-[6px]"><Svg s={10} box={10} w={1.2}><path d="M5 0v10M0 5h10" /></Svg></button>
      <span className="ml-[14px]">85%</span>
      <Caret className="ml-[6px] text-[#77777c]" />
      <button aria-label="全屏" className="ml-[43px]"><Svg s={15} box={15} w={1.2}><path d="M1 5V1h4M10 1h4v4M14 10v4h-4M5 14H1v-4" /></Svg></button>
      <button aria-label="适合宽度" className="mr-4 ml-[21px]"><Svg s={15} box={15} w={1.2}><path d="M1 1h13v13H1zM1 5h13M4 5h7" /></Svg></button>
      <Watermark />
    </footer>
  );
}

function Watermark() {
  return (
    <div className="pointer-events-none absolute right-3 bottom-[7px] flex items-center">
      <svg width="46" height="42" viewBox="0 0 46 42" aria-hidden="true">
        <path d="M39 1C22 1 9 9 6 21c-1 5 1 9 5 11 2-14 11-24 28-31z" fill="#6fa5dc" />
        <path d="M12 33c9 2 22-4 25-17-6-3-15 0-19 8 6-3 10-3 11 0-3 6-10 9-17 9z" fill="#8ccf9a" />
        <path d="M2 22c4-9 16-13 26-11-9 1-18 5-22 14z" fill="#a3d0f0" />
        <path d="M3 33c8 6 22 7 34-3-6 10-22 16-34 3z" fill="#5f9dd4" />
      </svg>
      <div className="flex flex-col whitespace-nowrap">
        <span className="text-[21px] leading-[24px] font-semibold text-[#94bfe6]">极光下载站</span>
        <span className="font-['Liberation_Sans'] text-[15px] leading-4 font-bold text-[#85c795]">www.xz7.com</span>
      </div>
    </div>
  );
}

export default function App() {
  return (
    <div lang="zh-CN" className="flex h-screen flex-col overflow-hidden font-['Noto_Sans','Noto_Sans_CJK_SC',sans-serif] leading-4">
      <TitleBar />
      <Ribbon />
      <FileTabs />
      <main className="relative flex min-h-0 flex-1">
        <div className="flex min-w-0 flex-1 flex-col bg-white">
          <div className="flex min-h-0 flex-1">
            <MindMap />
            <div className="w-[9px] shrink-0"><div className="mt-[180px] h-[465px] rounded-full bg-[#cfcfd4]" /></div>
          </div>
          <div className="h-[9px] shrink-0 pr-[152px] pl-[124px]"><div className="h-full rounded-t-md bg-[#d0d0d0]" /></div>
          <PaletteBar />
        </div>
        <Panel />
        <NoteDialog />
        <Arrows />
        <div className="absolute bottom-[-9px] left-[1340px] z-10 flex h-[26px] w-[61px] items-center justify-center gap-1 rounded-md border border-[#888] bg-white text-[13px] text-[#333] shadow-[0_2px_3px_rgba(0,0,0,0.45)]">
          <span>CH</span>
          <Svg s={12} box={12} w={1}><path d="M5 1c3 0 5.500 2.500 5.500 5.500S8 11 5 11c-1.500 0-3-.5-4-1.500C5 9.500 7 5 5 1z" /></Svg>
          <span>简</span>
        </div>
      </main>
      <StatusBar />
    </div>
  );
}
